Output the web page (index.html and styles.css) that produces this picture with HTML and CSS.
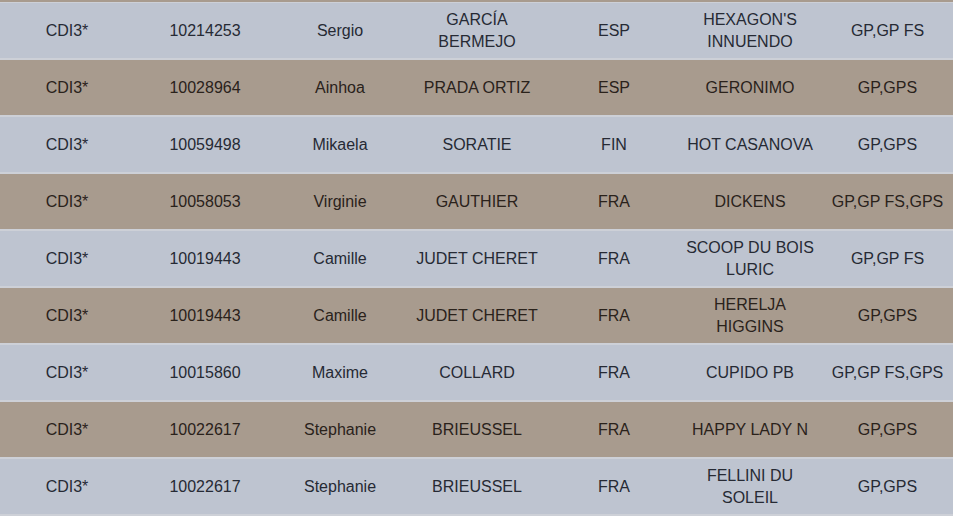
FILE: index.html
```html
<!DOCTYPE html>
<html>
<head>
<meta charset="utf-8">
<link rel="stylesheet" href="styles.css">
</head>
<body>
<div class="topstrip"></div>
<table class="riders">
<colgroup><col class="c1"><col class="c2"><col class="c3"><col class="c4"><col class="c5"><col class="c6"><col class="c7"></colgroup>
<tbody>
<tr class="blue"><td>CDI3*</td><td>10214253</td><td>Sergio</td><td>GARCÍA BERMEJO</td><td>ESP</td><td>HEXAGON'S INNUENDO</td><td>GP,GP FS</td></tr>
<tr class="brown"><td>CDI3*</td><td>10028964</td><td>Ainhoa</td><td>PRADA ORTIZ</td><td>ESP</td><td>GERONIMO</td><td>GP,GPS</td></tr>
<tr class="blue"><td>CDI3*</td><td>10059498</td><td>Mikaela</td><td>SORATIE</td><td>FIN</td><td>HOT CASANOVA</td><td>GP,GPS</td></tr>
<tr class="brown"><td>CDI3*</td><td>10058053</td><td>Virginie</td><td>GAUTHIER</td><td>FRA</td><td>DICKENS</td><td>GP,GP FS,GPS</td></tr>
<tr class="blue"><td>CDI3*</td><td>10019443</td><td>Camille</td><td>JUDET CHERET</td><td>FRA</td><td>SCOOP DU BOIS LURIC</td><td>GP,GP FS</td></tr>
<tr class="brown"><td>CDI3*</td><td>10019443</td><td>Camille</td><td>JUDET CHERET</td><td>FRA</td><td>HERELJA HIGGINS</td><td>GP,GPS</td></tr>
<tr class="blue"><td>CDI3*</td><td>10015860</td><td>Maxime</td><td>COLLARD</td><td>FRA</td><td>CUPIDO PB</td><td>GP,GP FS,GPS</td></tr>
<tr class="brown"><td>CDI3*</td><td>10022617</td><td>Stephanie</td><td>BRIEUSSEL</td><td>FRA</td><td>HAPPY LADY N</td><td>GP,GPS</td></tr>
<tr class="blue"><td>CDI3*</td><td>10022617</td><td>Stephanie</td><td>BRIEUSSEL</td><td>FRA</td><td>FELLINI DU SOLEIL</td><td>GP,GPS</td></tr>
</tbody>
</table>
</body>
</html>
```
FILE: styles.css
```css
html, body {
  margin: 0;
  padding: 0;
  background: #cdd0d7;
}
body {
  width: 953px;
  height: 516px;
  overflow: hidden;
  font-family: "Liberation Sans", Arial, sans-serif;
  font-size: 16px;
}
.topstrip {
  height: 2px;
  background: #a89b8e;
  border-bottom: 1px solid #cdd0d7;
}
.riders {
  width: 953px;
  border-collapse: collapse;
  table-layout: fixed;
}
.c1 { width: 134px; }
.c2 { width: 142px; }
.c3 { width: 128px; }
.c4 { width: 146px; }
.c5 { width: 128px; }
.c6 { width: 144px; }
.c7 { width: 131px; }
.riders td {
  height: 55px;
  padding: 0 3px;
  text-align: center;
  vertical-align: middle;
  line-height: 22px;
  border-bottom: 2px solid #cdd0d7;
  box-sizing: content-box;
}
.blue td {
  background: #bec4d0;
  color: #262a34;
}
.brown td {
  background: #a89b8e;
  color: #2a221b;
}
```
